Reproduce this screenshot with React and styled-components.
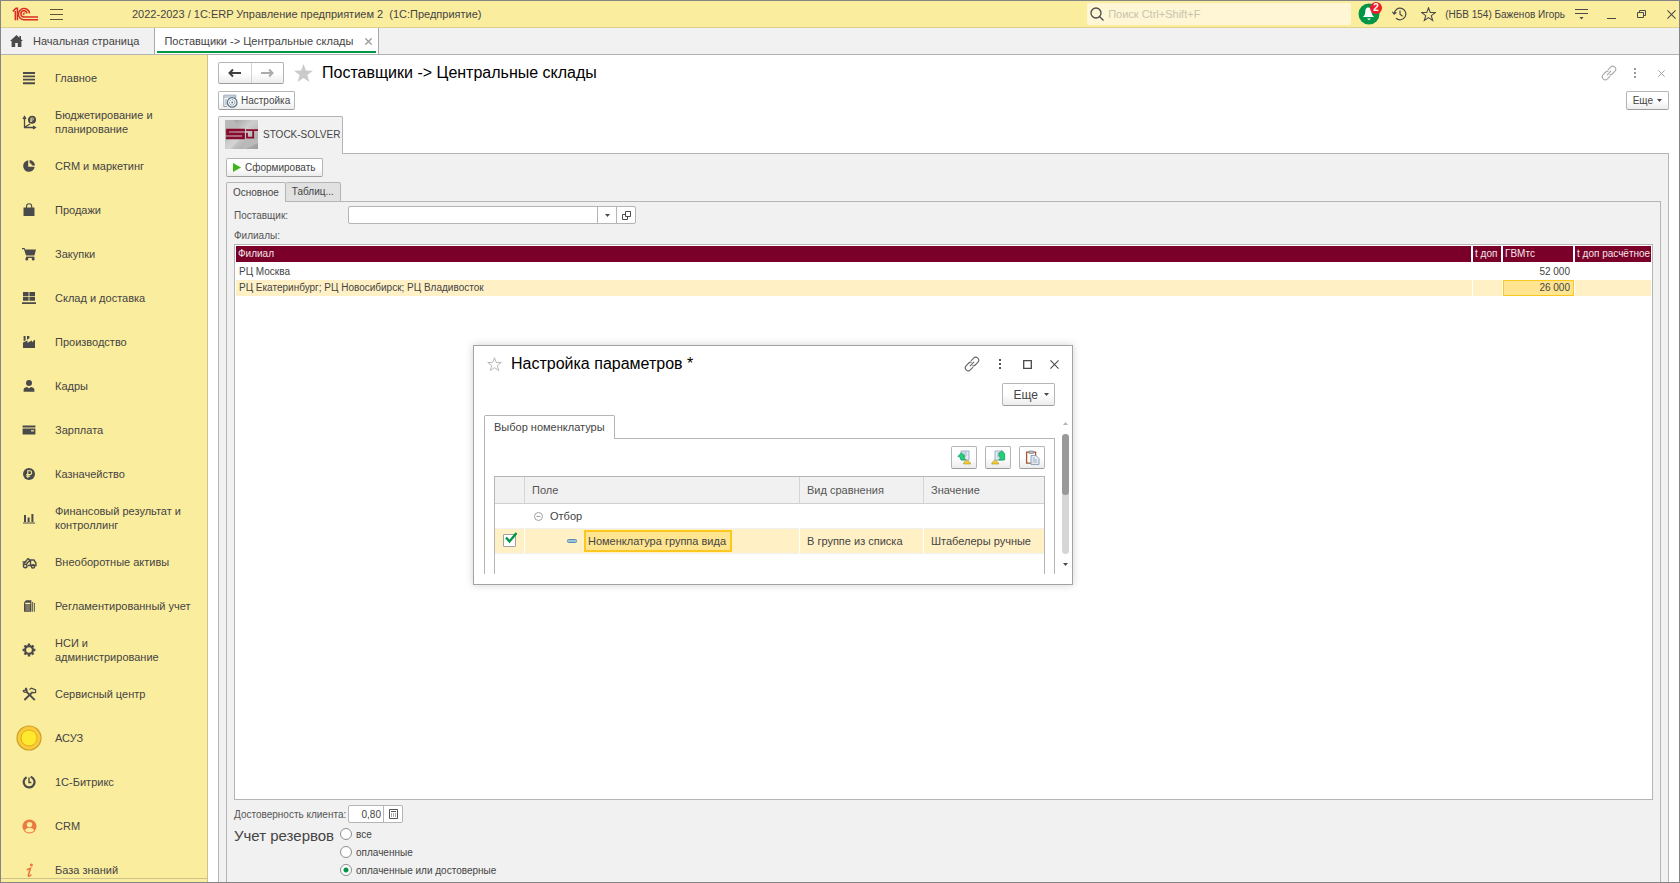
import React, { useState } from 'react';
import styled, { createGlobalStyle, css } from 'styled-components';

const Global = createGlobalStyle`
  * { box-sizing: border-box; }
  html, body { margin: 0; height: 100%; }
  body {
    font-family: "Liberation Sans", Arial, sans-serif;
    font-size: 11px;
    color: #444;
    background: #fff;
  }
  button, input { font: inherit; color: inherit; }
  button { padding: 0; cursor: pointer; }
  table { border-collapse: separate; border-spacing: 0; }
  svg { display: block; flex: none; }
`;

const yellow = '#fbed9e';
const line = '#b5b5b5';
const green = '#009646';

/* ---------- frame ---------- */

const Frame = styled.div`
  height: 100vh;
  display: flex;
  flex-direction: column;
  border: 1px solid #858585;
  overflow: hidden;
`;

const TitleBar = styled.header`
  display: flex;
  align-items: center;
  flex: none;
  height: 27px;
  padding: 0 0 0 11px;
  background: ${yellow};
  border-bottom: 1px solid #ddd08a;
`;

const IconButton = styled.button`
  display: flex;
  align-items: center;
  justify-content: center;
  flex: none;
  width: ${(p) => p.$w || 28}px;
  height: 22px;
  border: 0;
  background: none;
`;

const AppTitle = styled.h1`
  flex: 1;
  margin: 0 0 0 58px;
  font-size: 11px;
  font-weight: normal;
  white-space: pre;
`;

const Search = styled.label`
  display: flex;
  align-items: center;
  width: 264px;
  height: 22px;
  padding-left: 3px;
  gap: 4px;
  background: #fef6d4;
  border-radius: 2px;
`;

const SearchInput = styled.input`
  flex: 1;
  min-width: 0;
  border: 0;
  padding: 0;
  outline: 0;
  background: none;
  &::placeholder { color: #c9c4ae; opacity: 1; }
`;

const BellButton = styled(IconButton)`
  position: relative;
  margin-left: 3px;
`;

const Badge = styled.span`
  position: absolute;
  top: -1px;
  right: 2px;
  width: 12px;
  height: 12px;
  border-radius: 50%;
  background: #ee1c25;
  color: #fff;
  font-size: 10px;
  font-weight: bold;
  line-height: 12px;
  text-align: center;
`;

const User = styled.span`
  padding: 0 8px 0 3px;
  font-size: 10px;
  white-space: nowrap;
`;

const Controls = styled.div`
  display: flex;
  gap: ${(p) => p.$gap}px;
`;

const OpenTabs = styled.nav`
  display: flex;
  flex: none;
  height: 27px;
  background: #f1f1f1;
  border-bottom: 1px solid #b3b3b3;
`;

const OpenTab = styled.div`
  display: flex;
  align-items: center;
  gap: 12px;
  padding: 0 ${(p) => (p.$active ? 6 : 15)}px 0 9px;
  border-right: 1px solid #a8a8a8;
  ${(p) => p.$active && css`
    background: linear-gradient(${green}, ${green}) 2px 23px / calc(100% - 4px) 2px no-repeat #fff;
  `}
`;

const TabLink = styled.a`
  display: flex;
  align-items: center;
  gap: 10px;
  color: inherit;
  text-decoration: none;
  white-space: nowrap;
`;

const TabClose = styled.button`
  border: 0;
  background: none;
`;

const Body = styled.div`
  display: flex;
  flex: 1;
  min-height: 0;
`;

/* ---------- sections panel ---------- */

const Sidebar = styled.nav`
  display: flex;
  flex-direction: column;
  flex: none;
  width: 207px;
  background: ${yellow};
  border-right: 1px solid #cdc28a;
`;

const SectionList = styled.ul`
  flex: 1;
  min-height: 0;
  margin: 0;
  padding: 1px 0 0;
  overflow: hidden;
  list-style: none;
`;

const SidebarFoot = styled.div`
  height: 4px;
  border-top: 1px solid #cdc28a;
`;

const SectionLink = styled.a`
  display: grid;
  grid-template-columns: 54px 1fr;
  align-items: center;
  height: 44px;
  color: #444;
  line-height: 14px;
  text-decoration: none;
`;

const SectionIcon = styled.span`
  display: flex;
  justify-content: center;
  padding-left: 2px;
`;

const SectionName = styled.span`
  max-width: 138px;
`;

/* ---------- form ---------- */

const Main = styled.main`
  position: relative;
  display: flex;
  flex-direction: column;
  flex: 1;
  min-width: 0;
  padding: 7px 10px 0;
`;

const FormHead = styled.div`
  display: flex;
  align-items: center;
  height: 22px;
`;

const face = css`
  border: 1px solid ${line};
  border-bottom-color: #9d9d9d;
  border-radius: 2px;
  background: linear-gradient(#fff, #fff 50%, #ececec);
`;

const NavPair = styled.div`
  display: flex;
  width: 66px;
  height: 22px;
  ${face}
`;

const NavButton = styled.button`
  display: flex;
  flex: 1;
  align-items: center;
  justify-content: center;
  border: 0;
  background: none;
  & + & { border-left: 1px solid #d2d2d2; }
`;

const FavButton = styled.button`
  margin: 0 8px 0 9px;
  border: 0;
  background: none;
`;

const FormTitle = styled.h2`
  flex: 1;
  margin: 0;
  color: #000;
  font-size: 16px;
  font-weight: normal;
  white-space: nowrap;
`;

const CommandRow = styled.div`
  display: flex;
  justify-content: space-between;
  padding: 7px 0 6px;
`;

const Command = styled.button`
  display: inline-flex;
  align-items: center;
  justify-content: center;
  align-self: flex-start;
  gap: ${(p) => p.$gap || 3}px;
  height: 19px;
  padding: 0 ${(p) => p.$pad || 5}px;
  font-size: 10px;
  white-space: nowrap;
  ${face}
`;

const TabStrip = styled.div`
  display: flex;
  align-items: flex-end;
  position: relative;
  z-index: 1;
  margin-bottom: -1px;
`;

const ProductTab = styled.button`
  display: flex;
  align-items: center;
  gap: 5px;
  height: 38px;
  padding: 0 2px 3px 6px;
  font-size: 10px;
  border: 1px solid ${line};
  border-bottom: 0;
  border-radius: 2px 2px 0 0;
  background: #f1f1f1;
`;

const Panel = styled.section`
  display: flex;
  flex-direction: column;
  flex: 1;
  min-height: 0;
  padding: ${(p) => p.$pad || '4px 7px 0'};
  border: 1px solid ${line};
  border-bottom: 0;
  background: #f1f1f1;
`;

const InnerTab = styled.button`
  height: 20px;
  padding: 0 6px 1px;
  font-size: 10px;
  border: 1px solid ${line};
  border-bottom: ${(p) => (p.$active ? 0 : `1px solid ${line}`)};
  border-radius: 2px 2px 0 0;
  background: ${(p) => (p.$active ? '#f1f1f1' : '#e1e1e1')};
  & + & { border-left: 0; }
`;

const InnerTabs = styled(TabStrip)`
  margin-top: 5px;
`;

const Field = styled.div`
  display: flex;
  align-items: center;
  height: 18px;
  font-size: 10px;
`;

const FieldLabel = styled.label`
  flex: none;
  width: 114px;
  color: #555;
  white-space: nowrap;
`;

const InputGroup = styled.div`
  display: flex;
  width: ${(p) => p.$w}px;
  height: 18px;
  border: 1px solid ${line};
  border-radius: 2px;
  background: #fff;
`;

const TextInput = styled.input`
  flex: 1;
  min-width: 0;
  padding: 0 2px;
  border: 0;
  outline: 0;
  background: none;
  text-align: ${(p) => p.$align || 'left'};
`;

const InputButton = styled.button`
  display: flex;
  align-items: center;
  justify-content: center;
  width: 19px;
  border: 0;
  border-left: 1px solid ${line};
  background: none;
`;

const ListLabel = styled.div`
  padding: 6px 0 2px;
  color: #555;
  font-size: 10px;
  line-height: 12px;
`;

const TableBox = styled.div`
  flex: 1;
  min-height: 60px;
  padding: 1px 0 0 1px;
  border: 1px solid ${line};
  background: #fff;
  overflow: hidden;
`;

const BranchTable = styled.table`
  width: 100%;
  table-layout: fixed;
  font-size: 10px;
  th, td {
    height: 16px;
    padding: 0 4px 0 3px;
    font-weight: normal;
    line-height: 14px;
    text-align: left;
    white-space: nowrap;
  }
  th {
    height: 18px;
    padding: 0 0 0 2px;
    color: #f3e6ea;
    background: #7b0029;
    border-right: 2px solid #fff;
    border-bottom: 2px solid #fff;
    background-clip: padding-box;
  }
  th:last-child { border-right-width: 1px; }
`;

const BranchRow = styled.tr`
  td {
    background: ${(p) => (p.$selected ? '#fff1c5' : '#fff')};
    border-right: 1px solid #fff;
  }
`;

const NumCell = styled.td`
  && { text-align: right; }
  ${(p) => p.$current && css`
    && {
      background: #ffe58f;
      box-shadow: inset 0 0 0 1px #fcc71e;
    }
  `}
`;

const Reliability = styled(Field)`
  margin: 5px 0 2px;
`;

const Reserves = styled.fieldset`
  display: flex;
  margin: 0;
  padding: 0;
  border: 0;
`;

const ReservesTitle = styled.div`
  width: 106px;
  padding-top: 2px;
  font-size: 15px;
  line-height: 18px;
  white-space: nowrap;
`;

const Options = styled.div`
  display: flex;
  flex-direction: column;
`;

const Option = styled.label`
  display: flex;
  align-items: center;
  gap: 4px;
  height: 18px;
  font-size: 10px;
`;

const Radio = styled.input`
  appearance: none;
  width: 12px;
  height: 12px;
  margin: 0;
  border: 1px solid #8e8e8e;
  border-radius: 50%;
  background: #fff;
  &:checked { background: radial-gradient(circle, ${green} 0 2px, #fff 3px); }
`;

/* ---------- settings window ---------- */

const Window = styled.section`
  position: absolute;
  z-index: 2;
  top: 290px;
  left: 265px;
  width: 600px;
  height: 240px;
  display: flex;
  flex-direction: column;
  padding: 7px 3px 10px 10px;
  border: 1px solid #a3a3a3;
  background: #fff;
  box-shadow: 0 0 8px rgba(0, 0, 0, 0.18);
`;

const WindowHead = styled.div`
  display: flex;
  align-items: center;
  height: 22px;
  padding: 0 7px 0 2px;
`;

const WindowTitle = styled(FormTitle)`
  margin-left: 8px;
`;

const WindowMore = styled(Command)`
  align-self: flex-end;
  height: 23px;
  margin: 8px 14px 0 0;
  padding: 0 5px 0 11px;
  font-size: 12px;
`;

const WindowBody = styled.div`
  display: flex;
  flex: 1;
  gap: 7px;
  min-height: 0;
  margin-top: 9px;
`;

const Scrolled = styled.div`
  display: flex;
  flex-direction: column;
  flex: 1;
  min-width: 0;
`;

const WindowTab = styled.button`
  height: 24px;
  padding: 0 9px 2px;
  border: 1px solid ${line};
  border-bottom: 0;
  border-radius: 2px 2px 0 0;
  background: #fff;
`;

const WindowPanel = styled(Panel)`
  background: #fff;
`;

const Tools = styled.div`
  display: flex;
  justify-content: flex-end;
  gap: 8px;
  margin-bottom: 7px;
`;

const Tool = styled.button`
  display: flex;
  align-items: center;
  justify-content: center;
  width: 26px;
  height: 23px;
  ${face}
`;

const FilterBox = styled.div`
  flex: 1;
  min-height: 0;
  border: 1px solid ${line};
  border-bottom: 0;
  overflow: hidden;
`;

const FilterTable = styled.table`
  width: 100%;
  table-layout: fixed;
  th, td {
    height: 25px;
    padding: 0 0 0 7px;
    font-weight: normal;
    text-align: left;
    white-space: nowrap;
    border-right: 1px solid #fff;
    border-bottom: 1px solid #f1f1f1;
  }
  th {
    height: 27px;
    color: #555;
    background: #f1f1f1;
    border-right-color: #d5d5d5;
    border-bottom-color: #d0d0d0;
  }
  th:last-child, td:last-child { border-right: 0; }
`;

const FilterRow = styled.tr`
  td { background: ${(p) => (p.$selected ? '#fff1c5' : '#fff')}; }
`;

const Indent = styled.div`
  display: flex;
  align-items: center;
  gap: 7px;
  padding-left: ${(p) => p.$by}px;
`;

const Current = styled.span`
  height: 22px;
  padding: 0 4px 0 2px;
  line-height: 18px;
  border: 2px solid #fcc71e;
  background: #ffe58f;
`;

const Check = styled.label`
  position: relative;
  display: block;
  width: 15px;
  height: 15px;
  margin-left: 1px;
  svg { position: absolute; left: 1px; top: -2px; pointer-events: none; }
`;

const CheckBox = styled.input`
  appearance: none;
  display: block;
  width: 13px;
  height: 13px;
  margin: 0;
  border: 1px solid #a0a0a0;
  border-radius: 1px;
  background: #fff;
  &:not(:checked) + svg { display: none; }
`;

const ScrollBar = styled.div`
  display: flex;
  flex-direction: column;
  align-items: center;
  gap: 9px;
  width: 7px;
  padding: 7px 0 8px;
`;

const Track = styled.div`
  flex: 1;
  width: 7px;
  border-radius: 4px;
  background: #d6d6d6;
`;

const Thumb = styled.div`
  height: 61px;
  border-radius: 4px;
  background: #999;
`;

/* ---------- drawings ---------- */

const Logo = () => (
  <svg width="26" height="14" viewBox="0 0 26 14" fill="none" stroke="#dc2b25" strokeWidth="1.5">
    <path d="M.8 4.4 4 1.3h1.4v12M3.3 4v9.3" />
    <path d="M17.6 6.3A5.6 5.6 0 1 0 12.2 12.7H26" />
    <path d="M15 6.3A3.1 3.1 0 1 0 12.2 10H26" />
    <path d="M13.2 6.9a1 1 0 1 0-.8 1" strokeWidth="1" />
  </svg>
);

const Caret = ({ color = '#4a4a4a', up }) => (
  <svg width="5" height="3" viewBox="0 0 5 3" fill={color}>
    <path d={up ? 'M0 3h5L2.5 0z' : 'M0 0h5L2.5 3z'} />
  </svg>
);

const Cross = ({ size = 9, color = '#4a4a4a', w = 1.2 }) => (
  <svg width={size} height={size} viewBox="0 0 10 10" stroke={color} strokeWidth={w}>
    <path d="M.5.5l9 9M9.5.5l-9 9" />
  </svg>
);

const LinkIcon = ({ color }) => (
  <svg width="16" height="16" viewBox="0 0 16 16" fill="none" stroke={color} strokeWidth="1.1" strokeLinecap="round">
    <path d="M6.2 9.8 9.8 6.2" />
    <path d="M7.2 4.6 9.6 2.2a2.9 2.9 0 0 1 4.2 4.2l-2.6 2.6a2.9 2.9 0 0 1-2.4.8" />
    <path d="M8.8 11.4l-2.4 2.4a2.9 2.9 0 0 1-4.2-4.2l2.6-2.6a2.9 2.9 0 0 1 2.4-.8" />
  </svg>
);

const Dots = ({ color }) => (
  <svg width="2" height="10" viewBox="0 0 2 10" fill={color}>
    <rect width="2" height="2" /><rect y="4" width="2" height="2" /><rect y="8" width="2" height="2" />
  </svg>
);

const starPath = 'M10 1l2.3 6.2 6.7.2-5.3 4.1 1.9 6.5L10 14.2 4.4 18l1.9-6.5L1 7.4l6.7-.2z';
const Star = ({ size, fill = 'none', stroke = 'none', w = 1.4 }) => (
  <svg width={size} height={size} viewBox="0 0 20 20" fill={fill} stroke={stroke} strokeWidth={w}>
    <path d={starPath} />
  </svg>
);

const Arrow = ({ color, flip }) => (
  <svg width="13" height="10" viewBox="0 0 13 10" fill="none" stroke={color} strokeWidth="2">
    <path d={flip ? 'M0 5h11.5M8 1.5l3.5 3.5L8 8.5' : 'M13 5H1.5M5 1.5 1.5 5 5 8.5'} />
  </svg>
);

const SolverLogo = () => (
  <svg width="33" height="29" viewBox="0 0 33 29">
    <defs>
      <linearGradient id="steel" x1="0" y1="0" x2="1" y2="1">
        <stop offset="0" stopColor="#8e8e8e" /><stop offset=".45" stopColor="#cfcfcf" /><stop offset="1" stopColor="#9b9b9b" />
      </linearGradient>
    </defs>
    <path d="M0 0h33v29H0z" fill="url(#steel)" />
    <path d="M0 0h9l7 10H0zM22 19h11v4L20 29h-3z" fill="#b9b9b9" />
    <path d="M8 19h7l-9 10H0z" fill="#d2d2d2" />
    <g fill="none" stroke="#8a0a2e">
      <path d="M20 10.2H2.5v3.8h16v3.8H1" strokeWidth="2.8" />
      <path d="M28 17.6h-6v-4.800M21 10.200h12M28.200 10.200V18.600" strokeWidth="1.800" />
    </g>
  </svg>
);

const dark = '#4a4a4a';
const G = ({ children, s = 14, vb = 14, ...rest }) => (
  <svg width={s} height={s} viewBox={`0 0 ${vb} ${vb}`} fill={dark} {...rest}>{children}</svg>
);

const icons = {
  main: <G><path d="M1 1h12v2H1zM1 4.4h12v1.8H1zM1 7.8h12v1.8H1zM1 11.2h12v2H1z" /></G>,
  budget: (
    <G s={15} vb={15} fill="none" stroke={dark} strokeWidth="1.3">
      <path d="M2.5 2v10.5H13M1 4l1.5-2.4L4 4M11 11l2.4 1.5L11 14M3 12l5-3" />
      <circle cx="10" cy="4.8" r="3.4" fill={dark} />
      <path d="M9 7V3h1.5a1 1 0 0 1 0 2H8.4M8.3 6.2h2" stroke={yellow} strokeWidth=".8" />
    </G>
  ),
  pie: <G><path d="M6.2 1.3a5.8 5.8 0 1 0 6.5 6.5H6.2z" /><path d="M7.6 1a5.6 5.6 0 0 1 5.4 5.4H10A3 3 0 0 0 7.6 4z" /></G>,
  bag: <G><path d="M1.5 4.5h11V13h-11z" /><path d="M4.5 6V3.4a2.6 2.6 0 0 1 5.2 0V6" fill="none" stroke={dark} strokeWidth="1.1" /></G>,
  cart: <G><path d="M0 1h2.6l.6 1.6H14L12.4 8.6H4L2 2.2H0z" /><path d="M4 9.6h8.4V11H4z" /><circle cx="4.8" cy="12" r="1.5" /><circle cx="11.2" cy="12" r="1.5" /></G>,
  boxes: <G><path d="M1 1h5.6v4H1zM7.4 1H13v4H7.4zM1 5.8h5.6v4H1zM7.4 5.8H13v4H7.4zM0 11.2h14V13H0z" /></G>,
  factory: <G><path d="M1 13V7.4l4.4-1.8v2.2L10 5.4v1.8l3-2.6V13zM1.6 1h2v4.4l-2 .7zM5 1h2.4v2.2L5 4.8z" /></G>,
  person: <G><circle cx="7" cy="4" r="3" /><path d="M1.6 12.8V11c0-2.2 2.2-3 3.6-3L7 9.4 8.8 8c1.4 0 3.6.8 3.6 3v1.8z" /></G>,
  card: <G><path d="M.6 2.4h12.8v2H.6zM.6 5.6h12.8v5.8H.6z" /><path d="M9 7.2h3v1.2H9z" fill={yellow} /></G>,
  ruble: <G><circle cx="7" cy="7" r="6" /><path d="M5.8 11V3.8h2a1.9 1.9 0 0 1 0 3.8H4.2M4.2 9.2h4" fill="none" stroke={yellow} strokeWidth="1.1" /></G>,
  chart: <G><path d="M2 4h2v7H2zM5.6 6.4h2V11h-2zM9.4 3h2v8h-2zM1 11.4h12v1.2H1z" /></G>,
  truck: (
    <G s={15} vb={15} fill="none" stroke={dark} strokeWidth="1.4">
      <path d="M1 9.5 6 3.6 8 5 4.6 9M8.5 10.5V5h3.4l2 3v2.5H6" />
      <circle cx="3.2" cy="11" r="1.8" /><circle cx="11" cy="11.4" r="1.6" />
      <path d="M.5 7h4" />
    </G>
  ),
  report: <G><path d="M2 3.6 4 1.2h5.4v11.6H2z" /><path d="M10.2 3h1v9.8h-1zM12 4h.8v8.8H12z" /><path d="M3.4 4h4.6v1H3.4zM3.4 7h4.6M3.4 9h4.6M3.4 11h4.6" fill={yellow} stroke={yellow} strokeWidth=".6" /></G>,
  gear: (
    <G fill="none" stroke={dark}>
      <circle cx="7" cy="7" r="3.9" strokeWidth="2.2" />
      <path d="M7 .6v2M7 11.4v2M.6 7h2M11.4 7h2M2.5 2.5l1.4 1.4M10.1 10.1l1.4 1.4M11.5 2.5l-1.4 1.4M3.9 10.1l-1.4 1.4" strokeWidth="2.4" />
    </G>
  ),
  tools: (
    <G s={15} vb={15} fill="none" stroke={dark} strokeWidth="1.9">
      <path d="M4.4 4.6l8.4 8.6M10 5.6 2.4 13" />
      <path d="M3.6.9v2.3L1 3.6M1 3.6c.6 1.8 2.2 2 3.4 1.2C5.4 3.8 5 1.8 3.6.9" strokeWidth="1.3" />
      <path d="M7.4 2.6 9.6 1.2 13.6 3v2.4L11 5.8 9.6 4.6" strokeWidth="1.2" />
    </G>
  ),
  coin: (
    <G s={26} vb={26}>
      <circle cx="13" cy="13" r="12" fill="#fbc93a" stroke="#c9a227" strokeWidth="1.2" />
      <circle cx="13" cy="13" r="8" fill="#ffe92e" stroke="#e0b01c" strokeWidth="1" />
    </G>
  ),
  bitrix: (
    <G fill="none" stroke={dark}>
      <path d="M4.6 2.2A5.4 5.4 0 1 0 8.6 1.8" strokeWidth="2.2" />
      <path d="M7 2.500V7.500h2.400" strokeWidth="1.400" />
    </G>
  ),
  crm: (
    <G s={15} vb={15}>
      <circle cx="7.5" cy="7.5" r="7" fill="#ea7a40" />
      <circle cx="7.5" cy="5.6" r="2.7" fill={yellow} />
      <path d="M2.8 11.6c.6-2 2.6-2.8 4.7-2.8s4.1.8 4.7 2.8c-1.2 1.3-2.8 1.9-4.7 1.9s-3.5-.6-4.7-1.9z" fill={yellow} />
    </G>
  ),
  info: (
    <G s={15} vb={15} fill="none" stroke="#ea7a40" strokeWidth="1.6" strokeLinecap="round">
      <path d="M5.4 6.6 8.4 5.4 6.4 12.2c-.2 1.4.9 1.4 2.6-.2" /><circle cx="9.4" cy="1.9" r=".7" />
    </G>
  ),
};

const Home = () => (
  <svg width="13" height="12" viewBox="0 0 13 12" fill={dark}>
    <path d="M6.5 0 0 6h1.6v6h3.6V8h2.6v4h3.6V6H13L11 4.2V1H9.4v1.7z" />
  </svg>
);

const UserFile = ({ down }) => (
  <svg width="15" height="15" viewBox="0 0 15 15">
    <path d="M4 1h8v9H4z" fill="#e6edf5" stroke="#92a7bf" strokeWidth=".9" />
    <path d="M6 3h4M6 5h4M6 7h3" stroke="#92a7bf" strokeWidth=".8" />
    {down ? (
      <>
        <path d="M.8 14c0-2 1.6-2.6 3-4 1.4 1.4 4 2 4 4z" fill="#f2cf3a" stroke="#a98b1c" strokeWidth=".6" />
        <path d="M8 3.2 10.5 1l3.2 2.6v6.4H7.6l2-2.2-1.8-2z" fill="#22d07a" stroke="#0e9a52" strokeWidth=".7" />
      </>
    ) : (
      <>
        <path d="M6.6 14c0-2 1.6-2.6 3-4 1.4 1.4 4 2 4 4z" fill="#f2cf3a" stroke="#a98b1c" strokeWidth=".6" />
        <path d="M.8 6.4 4.4 2.8 8 6.2 6.4 6.4 8.6 10 4 9.8 2.6 6.8z" fill="#22d07a" stroke="#0e9a52" strokeWidth=".7" />
      </>
    )}
  </svg>
);

const Paste = () => (
  <svg width="15" height="15" viewBox="0 0 15 15">
    <path d="M1.6 2.2h9v11h-9z" fill="#fff" stroke="#a5562f" strokeWidth="1.3" />
    <path d="M4 1h4.4v2.4H4z" fill="#b9c0c8" stroke="#77808a" strokeWidth=".7" />
    <path d="M6 5.6h5l3 3v5.8H6z" fill="#eef3f9" stroke="#7f93ab" strokeWidth=".9" />
    <path d="M7.6 8h2.4M7.6 10h4.6M7.6 12h4.6" stroke="#7f93ab" strokeWidth=".8" />
  </svg>
);

const sections = [
  ['main', 'Главное'],
  ['budget', 'Бюджетирование и планирование'],
  ['pie', 'CRM и маркетинг'],
  ['bag', 'Продажи'],
  ['cart', 'Закупки'],
  ['boxes', 'Склад и доставка'],
  ['factory', 'Производство'],
  ['person', 'Кадры'],
  ['card', 'Зарплата'],
  ['ruble', 'Казначейство'],
  ['chart', 'Финансовый результат и контроллинг'],
  ['truck', 'Внеоборотные активы'],
  ['report', 'Регламентированный учет'],
  ['gear', 'НСИ и администрирование'],
  ['tools', 'Сервисный центр'],
  ['coin', 'АСУЗ'],
  ['bitrix', '1С-Битрикс'],
  ['crm', 'CRM'],
  ['info', 'База знаний'],
];

const branches = [
  { name: 'РЦ Москва', volume: '52 000' },
  { name: 'РЦ Екатеринбург; РЦ Новосибирск; РЦ Владивосток', volume: '26 000', selected: true },
];

const reserveOptions = ['все', 'оплаченные', 'оплаченные или достоверные'];

function TopBar() {
  return (
    <TitleBar>
      <Logo />
      <IconButton $w={36} aria-label="Меню">
        <svg width="13" height="11" viewBox="0 0 13 11" stroke="#5c5636"><path d="M0 .5h13M0 5.5h13M0 10.5h13" /></svg>
      </IconButton>
      <AppTitle>2022-2023 / 1С:ERP Управление предприятием 2  (1С:Предприятие)</AppTitle>
      <Search>
        <svg width="14" height="14" viewBox="0 0 14 14" fill="none" stroke={dark} strokeWidth="1.3"><circle cx="6" cy="6" r="5" /><path d="M9.5 9.5l4 4" /></svg>
        <SearchInput aria-label="Поиск" placeholder="Поиск Ctrl+Shift+F" />
      </Search>
      <BellButton $w={30} aria-label="Оповещения">
        <svg width="22" height="22" viewBox="0 0 22 22">
          <circle cx="11" cy="11" r="10.5" fill={green} />
          <path d="M10 4.5c3 0 3.4 2.5 3.6 5 .2 2 .8 3 2.6 4.5H4.8c1.8-1.5 2.2-2.5 2.4-4.5.2-2.5.6-5 2.8-5zM9 15.6h4l-2 1.6z" fill="#fff" />
        </svg>
        <Badge>2</Badge>
      </BellButton>
      <IconButton $w={30} aria-label="История">
        <svg width="15" height="14" viewBox="0 0 15 14" fill="none" stroke={dark} strokeWidth="1.2">
          <path d="M2.2 7a5.8 5.8 0 1 1 1.8 4.2M.4 4.8 2.2 7.2 4.4 5.2M8 3.5V7.2l2.6 2" />
        </svg>
      </IconButton>
      <IconButton $w={28} aria-label="Избранное"><Star size={15} stroke={dark} /></IconButton>
      <User>(НБВ 154) Баженов Игорь</User>
      <Controls $gap={14}>
        <IconButton $w={16} aria-label="Настройки">
          <svg width="13" height="12" viewBox="0 0 13 12" stroke={dark}><path d="M0 1.5h13M0 5.5h13" /><path d="M4.5 9h4l-2 2.5z" fill={dark} stroke="none" /></svg>
        </IconButton>
        <IconButton $w={16} aria-label="Свернуть">
          <svg width="9" height="9" viewBox="0 0 9 9" stroke={dark}><path d="M0 8.5h9" /></svg>
        </IconButton>
        <IconButton $w={16} aria-label="Развернуть">
          <svg width="9" height="9" viewBox="0 0 9 9" fill="none" stroke={dark}><path d="M.5 2.5h6v5h-6zM2.5 2V.5h6v5H7" /></svg>
        </IconButton>
        <IconButton $w={16} aria-label="Закрыть"><Cross /></IconButton>
      </Controls>
    </TitleBar>
  );
}

function SettingsWindow() {
  const [checked, setChecked] = useState(true);
  return (
    <Window role="dialog" aria-labelledby="params-title">
      <WindowHead>
        <IconButton $w={17} aria-label="Избранное"><Star size={15} stroke="#b0b0b0" w={1.2} /></IconButton>
        <WindowTitle id="params-title">Настройка параметров *</WindowTitle>
        <Controls $gap={12}>
          <IconButton $w={16} aria-label="Ссылка"><LinkIcon color="#666" /></IconButton>
          <IconButton $w={16} aria-label="Действия"><Dots color="#555" /></IconButton>
          <IconButton $w={15} aria-label="Развернуть">
            <svg width="9" height="9" viewBox="0 0 9 9" fill="none" stroke={dark} strokeWidth="1.3"><path d="M.7.7h7.6v7.6H.7z" /></svg>
          </IconButton>
          <IconButton $w={15} aria-label="Закрыть"><Cross /></IconButton>
        </Controls>
      </WindowHead>
      <WindowMore $gap={6}>Еще<Caret /></WindowMore>
      <WindowBody>
        <Scrolled>
          <TabStrip role="tablist"><WindowTab role="tab" aria-selected="true">Выбор номенклатуры</WindowTab></TabStrip>
          <WindowPanel $pad="7px 9px 0">
            <Tools>
              <Tool aria-label="Загрузить"><UserFile /></Tool>
              <Tool aria-label="Сохранить"><UserFile down /></Tool>
              <Tool aria-label="Вставить"><Paste /></Tool>
            </Tools>
            <FilterBox>
              <FilterTable>
                <colgroup><col width="30" /><col /><col width="124" /><col width="120" /></colgroup>
                <thead>
                  <tr><th aria-label="Использование" /><th>Поле</th><th>Вид сравнения</th><th>Значение</th></tr>
                </thead>
                <tbody>
                  <FilterRow>
                    <td />
                    <td>
                      <Indent $by={2}>
                        <svg width="9" height="9" viewBox="0 0 9 9" fill="none" stroke="#a0a0a0"><circle cx="4.5" cy="4.5" r="4" /><path d="M2.5 4.5h4" /></svg>
                        Отбор
                      </Indent>
                    </td>
                    <td />
                    <td />
                  </FilterRow>
                  <FilterRow $selected>
                    <td>
                      <Check>
                        <CheckBox type="checkbox" aria-label="Использовать отбор" checked={checked} onChange={() => setChecked(!checked)} />
                        <svg width="14" height="13" viewBox="0 0 14 13" fill="none" stroke={green} strokeWidth="2.4"><path d="M2 5.5l3.5 4L12.5 1" /></svg>
                      </Check>
                    </td>
                    <td>
                      <Indent $by={35}>
                        <svg width="10" height="4" viewBox="0 0 10 4"><rect x=".5" y=".5" width="9" height="3" rx="1" fill="#9cc3dd" stroke="#5f8fb0" /></svg>
                        <Current>Номенклатура группа вида</Current>
                      </Indent>
                    </td>
                    <td>В группе из списка</td>
                    <td>Штабелеры ручные</td>
                  </FilterRow>
                </tbody>
              </FilterTable>
            </FilterBox>
          </WindowPanel>
        </Scrolled>
        <ScrollBar>
          <Caret up color="#b5b5b5" />
          <Track><Thumb /></Track>
          <Caret />
        </ScrollBar>
      </WindowBody>
    </Window>
  );
}

export default function App() {
  const [reserve, setReserve] = useState(2);
  return (
    <Frame>
      <Global />
      <TopBar />
      <OpenTabs>
        <OpenTab><TabLink href="#home"><Home />Начальная страница</TabLink></OpenTab>
        <OpenTab $active>
          <TabLink href="#suppliers">Поставщики -&gt; Центральные склады</TabLink>
          <TabClose aria-label="Закрыть вкладку"><Cross size={7} color="#999" w={1.8} /></TabClose>
        </OpenTab>
      </OpenTabs>
      <Body>
        <Sidebar>
          <SectionList>
            {sections.map(([id, name]) => (
              <li key={id}>
                <SectionLink href={`#${id}`}>
                  <SectionIcon>{icons[id]}</SectionIcon>
                  <SectionName>{name}</SectionName>
                </SectionLink>
              </li>
            ))}
          </SectionList>
          <SidebarFoot />
        </Sidebar>
        <Main>
          <FormHead>
            <NavPair>
              <NavButton aria-label="Назад"><Arrow color="#3f3f3f" /></NavButton>
              <NavButton aria-label="Вперед"><Arrow color="#ababab" flip /></NavButton>
            </NavPair>
            <FavButton aria-label="В избранное"><Star size={21} fill="#c9cbcd" /></FavButton>
            <FormTitle>Поставщики -&gt; Центральные склады</FormTitle>
            <Controls $gap={10}>
              <IconButton $w={16} aria-label="Ссылка"><LinkIcon color="#a8a8a8" /></IconButton>
              <IconButton $w={16} aria-label="Действия"><Dots color="#999" /></IconButton>
              <IconButton $w={16} aria-label="Закрыть"><Cross size={7} color="#a0a0a0" w={1.4} /></IconButton>
            </Controls>
          </FormHead>
          <CommandRow>
            <Command $pad={4}>
              <svg width="15" height="14" viewBox="0 0 15 14" fill="none" stroke="#5c7288">
                <path d="M4 12.5H.8V1.2h12V4M.8 3h12M3 5v6" strokeWidth=".9" stroke="#8398ad" />
                <circle cx="9.2" cy="8.4" r="4.8" fill="#fff" strokeWidth="1.2" />
                <circle cx="9.2" cy="8.4" r="2.7" strokeWidth="1" strokeDasharray="1.4 1" />
                <circle cx="9.2" cy="8.4" r="1" fill="#5c7288" stroke="none" />
              </svg>
              Настройка
            </Command>
            <Command $pad={6} $gap={4}>Еще<Caret /></Command>
          </CommandRow>
          <TabStrip role="tablist">
            <ProductTab role="tab" aria-selected="true"><SolverLogo />STOCK-SOLVER</ProductTab>
          </TabStrip>
          <Panel>
            <Command $pad={6} $gap={4}>
              <svg width="8" height="9" viewBox="0 0 8 9" fill="#3fb618"><path d="M0 0l8 4.5L0 9z" /></svg>
              Сформировать
            </Command>
            <InnerTabs role="tablist">
              <InnerTab role="tab" aria-selected="true" $active>Основное</InnerTab>
              <InnerTab role="tab" aria-selected="false">Таблиц...</InnerTab>
            </InnerTabs>
            <Panel $pad="4px 7px 3px">
              <Field>
                <FieldLabel htmlFor="supplier">Поставщик:</FieldLabel>
                <InputGroup $w={288}>
                  <TextInput id="supplier" />
                  <InputButton aria-label="Выбрать из списка"><Caret /></InputButton>
                  <InputButton aria-label="Открыть">
                    <svg width="9" height="9" viewBox="0 0 9 9" fill="none" stroke={dark}><path d="M3.5.5h5v5h-5zM3 3.5H.5v5h5V6" /></svg>
                  </InputButton>
                </InputGroup>
              </Field>
              <ListLabel id="branches-label">Филиалы:</ListLabel>
              <TableBox>
                <BranchTable aria-labelledby="branches-label">
                  <colgroup><col /><col width="30" /><col width="72" /><col width="77" /></colgroup>
                  <thead>
                    <tr><th>Филиал</th><th>t доп</th><th>ГВМтс</th><th>t доп расчётное</th></tr>
                  </thead>
                  <tbody>
                    {branches.map((b) => (
                      <BranchRow key={b.name} $selected={b.selected}>
                        <td>{b.name}</td>
                        <td />
                        <NumCell $current={b.selected}>{b.volume}</NumCell>
                        <td />
                      </BranchRow>
                    ))}
                  </tbody>
                </BranchTable>
              </TableBox>
              <Reliability>
                <FieldLabel htmlFor="reliability">Достоверность клиента:</FieldLabel>
                <InputGroup $w={55}>
                  <TextInput id="reliability" defaultValue="0,80" $align="right" />
                  <InputButton aria-label="Калькулятор">
                    <svg width="9" height="10" viewBox="0 0 9 10" fill="none" stroke="#555"><path d="M.5.5h8v9h-8zM2 2.5h5" /><path d="M2 5h5M2 7h5" strokeDasharray="1 1" /></svg>
                  </InputButton>
                </InputGroup>
              </Reliability>
              <Reserves aria-labelledby="reserves-title">
                <ReservesTitle id="reserves-title">Учет резервов</ReservesTitle>
                <Options>
                  {reserveOptions.map((text, i) => (
                    <Option key={text}>
                      <Radio type="radio" name="reserve" checked={reserve === i} onChange={() => setReserve(i)} />
                      {text}
                    </Option>
                  ))}
                </Options>
              </Reserves>
            </Panel>
          </Panel>
          <SettingsWindow />
        </Main>
      </Body>
    </Frame>
  );
}
